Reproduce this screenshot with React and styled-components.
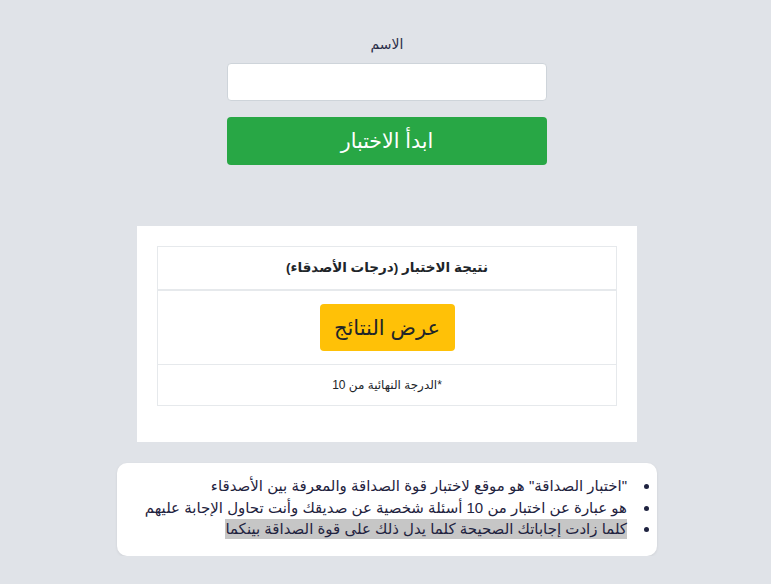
import React from "react";
import styled, { createGlobalStyle } from "styled-components";

const Global = createGlobalStyle`
  html, body { margin: 0; padding: 0; }
  body {
    background: #e0e3e8;
    font-family: "Liberation Sans", "DejaVu Sans", sans-serif;
    color: #212529;
  }
`;

const Page = styled.div`
  direction: rtl;
  display: flex;
  flex-direction: column;
  align-items: center;
  padding: 34px 0 0 3px;
`;

const Form = styled.form`
  width: 320px;
  display: flex;
  flex-direction: column;
  align-items: stretch;
`;

const Label = styled.label`
  text-align: center;
  font-size: 14px;
  color: #2b2f4a;
  line-height: 20px;
  margin-bottom: 9px;
`;

const Input = styled.input`
  box-sizing: border-box;
  height: 38px;
  border: 1px solid #ced4da;
  border-radius: 4px;
  background: #fff;
  margin-bottom: 16px;
  outline: none;
`;

const StartButton = styled.button`
  height: 48px;
  border: none;
  border-radius: 4px;
  background: #28a745;
  color: #fff;
  font-family: inherit;
  font-size: 20.6px;
  line-height: 24px;
  cursor: pointer;
`;

const Panel = styled.section`
  margin-top: 61px;
  width: 500px;
  box-sizing: border-box;
  background: #fff;
  padding: 20px 20px 36px;
`;

const Table = styled.table`
  width: 100%;
  border-collapse: collapse;
  text-align: center;
`;

const HeadCell = styled.th`
  border: 1px solid #e6e9ec;
  border-bottom: 2px solid #e6e9ec;
  height: 42px;
  padding: 0;
  font-size: 13.5px;
  line-height: 20px;
  font-weight: bold;
  color: #212529;
`;

const Cell = styled.td`
  border: 1px solid #e6e9ec;
  height: ${(p) => p.$h}px;
  font-size: ${(p) => p.$fs || 14}px;
  line-height: 18px;
  color: #212529;
  padding: 0;
`;

const ResultButton = styled.button`
  width: 135px;
  height: 47px;
  border: none;
  border-radius: 4px;
  background: #ffc107;
  color: #212529;
  font-family: inherit;
  font-size: 21px;
  line-height: 26px;
  cursor: pointer;
`;

const InfoCard = styled.div`
  margin-top: 21px;
  width: 540px;
  box-sizing: border-box;
  background: #fff;
  border-radius: 10px;
  box-shadow: 0 1px 3px rgba(0, 0, 0, 0.08);
  padding: 12px 0 16px;
`;

const List = styled.ul`
  margin: 0;
  padding: 0 24px 0 0;
  font-size: 15px;
  line-height: 21.5px;
  color: #1f2340;
`;

const Item = styled.li`
  padding-right: 6px;
`;

const Mark = styled.span`
  background: #c6c6c6;
  padding: 1px 0 2px;
`;

export default function App() {
  return (
    <>
      <Global />
      <Page>
        <Form onSubmit={(e) => e.preventDefault()}>
          <Label htmlFor="name">الاسم</Label>
          <Input id="name" type="text" />
          <StartButton type="submit">ابدأ الاختبار</StartButton>
        </Form>
        <Panel>
          <Table>
            <thead>
              <tr>
                <HeadCell>نتيجة الاختبار (درجات الأصدقاء)</HeadCell>
              </tr>
            </thead>
            <tbody>
              <tr>
                <Cell $h={73}>
                  <ResultButton>عرض النتائج</ResultButton>
                </Cell>
              </tr>
              <tr>
                <Cell $h={40} $fs={12}>*الدرجة النهائية من 10</Cell>
              </tr>
            </tbody>
          </Table>
        </Panel>
        <InfoCard>
          <List>
            <Item>"اختبار الصداقة" هو موقع لاختبار قوة الصداقة والمعرفة بين الأصدقاء</Item>
            <Item>هو عبارة عن اختبار من 10 أسئلة شخصية عن صديقك وأنت تحاول الإجابة عليهم</Item>
            <Item>
              <Mark>كلما زادت إجاباتك الصحيحة كلما يدل ذلك على قوة الصداقة بينكما</Mark>
            </Item>
          </List>
        </InfoCard>
      </Page>
    </>
  );
}
